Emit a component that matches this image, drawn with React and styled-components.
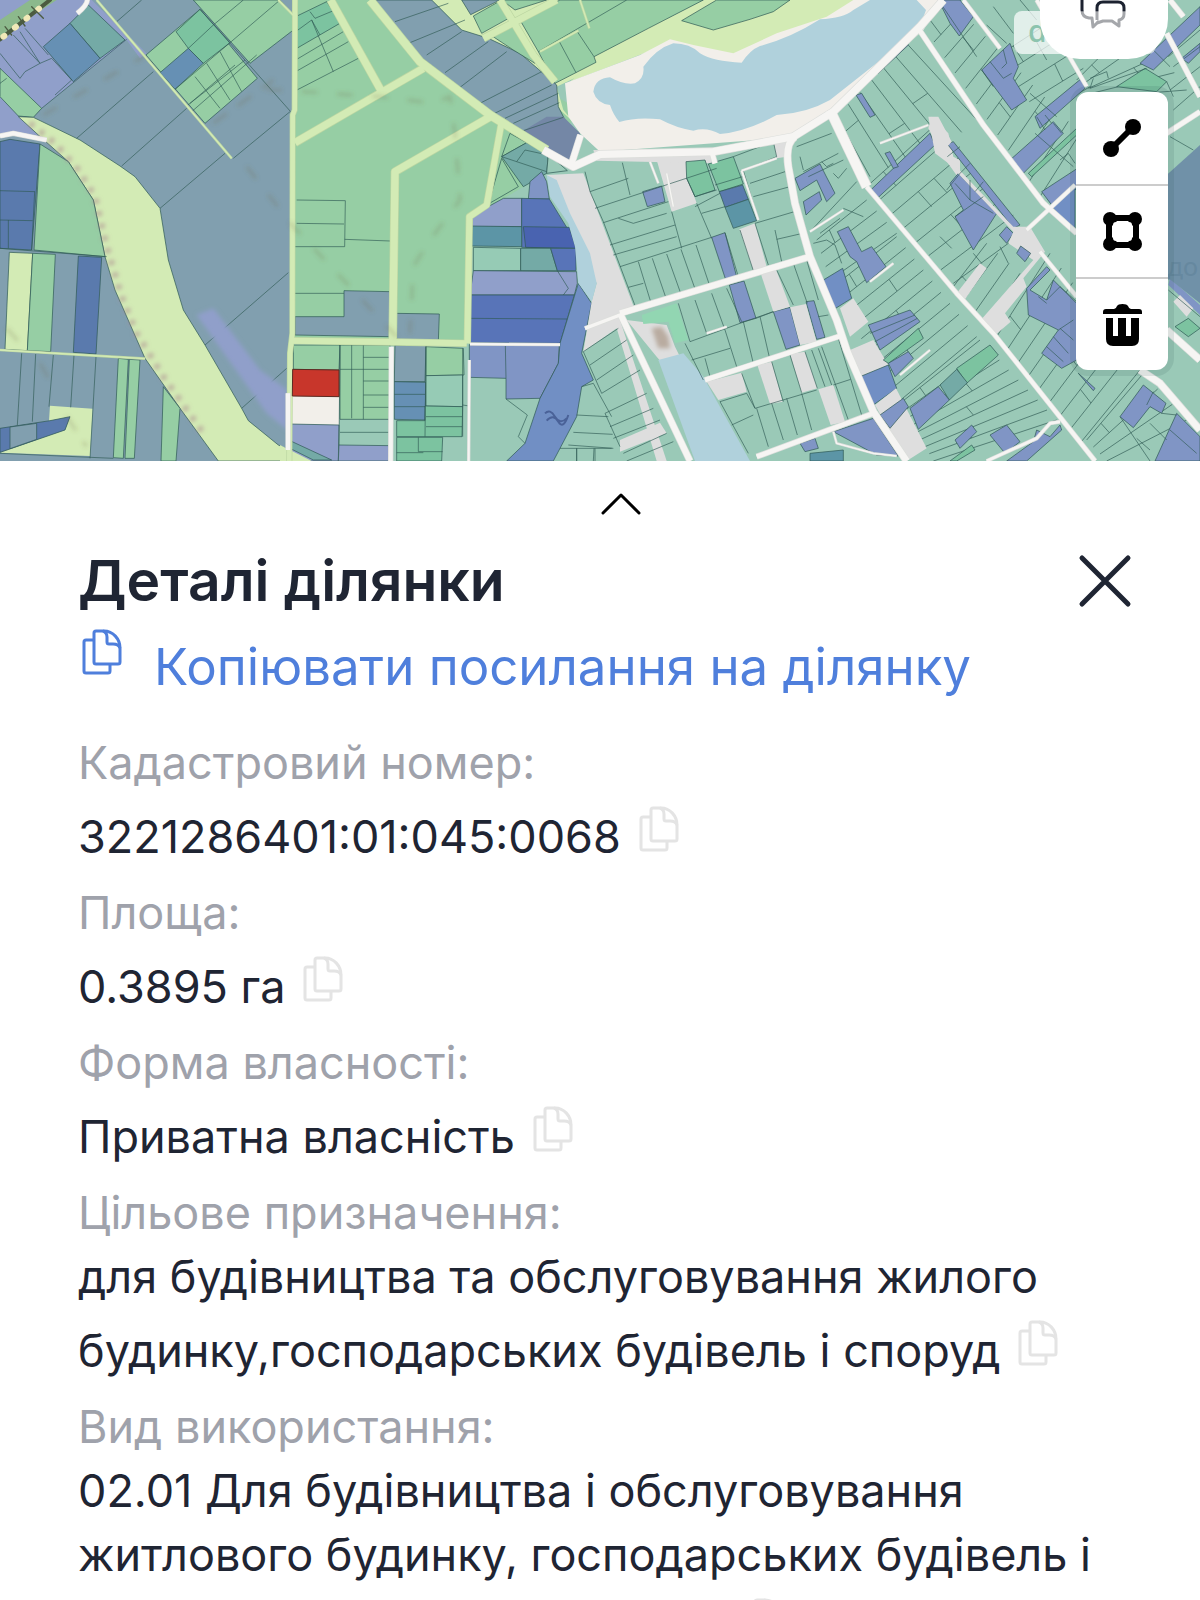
import React from 'react';
import styled, { createGlobalStyle } from 'styled-components';

const COLORS = {
  slate: '#819faf',
  green: '#96cea4',
  teal: '#9ac9b7',
  aqua: '#96cbb5',
  mint: '#7cc3a0',
  park: '#92d6b2',
  sea: '#74aaa6',
  pond: '#5c95a6',
  lime: '#d3ebb5',
  violet: '#909fca',
  purple: '#8095c5',
  dusk: '#7487a6',
  blue: '#5a7aad',
  royal: '#5874b8',
  deep: '#4963b0',
  steel: '#6690b4',
  river: '#718fc4',
  water: '#b0d1dc',
  sand: '#f2efea',
  grey: '#dedede',
  red: '#c8362b',
};

// [color, points, outlined]
const WEST = [
  ['slate', '0,0 885,0 875,1383 0,1383'],
  ['violet', '0,0 275,0 440,160 420,175 380,120 125,325 0,205'],
  ['violet', '0,285 60,350 115,405 0,400'],
  ['slate', '285,0 590,0 440,160 400,120'],
  ['sea', '265,15 375,120 300,175 210,70', 1],
  ['steel', '210,70 300,175 220,245 130,140', 1],
  ['green', '0,205 125,325 100,352 55,348 0,290', 1],
  ['green', '580,0 840,0 882,48 880,90 750,190', 1],
  ['green', '438,165 600,28 772,235 615,370', 1],
  ['mint', '528,95 600,28 690,128 610,190 565,145', 1],
  ['steel', '480,218 565,145 610,190 525,268', 1],
  ['lime', '55,350 100,352 240,420 360,498 405,530 480,625 505,780 550,930 615,1035 725,1225 745,1262 835,1335 935,1383 655,1383 540,1225 435,1075 345,870 315,770 280,600 205,485 115,405', 1],
  ['blue', '0,425 30,418 120,432 95,750 0,745', 1],
  ['green', '120,432 205,485 280,600 315,770 102,750', 1],
  ['lime', '28,757 98,760 82,1052 15,1048', 1],
  ['green', '98,760 166,763 152,1055 82,1052', 1],
  ['blue', '235,768 305,772 288,1062 220,1057', 1],
  ['green', '355,1075 385,1078 370,1375 340,1373', 1],
  ['green', '388,1078 420,1080 403,1375 375,1375', 1],
  ['green', '490,1160 540,1225 528,1383 483,1383', 1],
  ['lime', '150,1217 278,1226 270,1368 0,1358 195,1290 210,1250 147,1262'],
  ['blue', '0,1285 150,1262 210,1250 195,1290 0,1357', 1],
  ['slate', '30,1281 110,1270 110,1318 30,1346', 1],
];

const WEST_LINES =
  'M125,325L380,118M230,415L460,215M365,498L560,325M480,625L675,460M700,475L870,335M615,1035L865,818M725,1225L860,1105M350,65L425,0' +
  'M600,28L872,335M640,75L730,0M690,128L840,0M640,75L565,145M525,268L690,128M560,318L735,180M575,335L770,165M585,230L660,325M620,190L690,300M660,155L725,275M570,310L705,195' +
  'M0,572L105,575M0,660L98,662M25,660L25,745M104,575L95,750M0,745L320,770' +
  'M65,1060L52,1275M107,1062L97,1265M160,1065L147,1220M222,1065L212,1222M288,1070L270,1375M0,1360L340,1375' +
  'M60,95L120,190L155,175L215,240L165,285M40,105L118,188M75,85L145,165M0,160L60,235L75,215L120,190M0,250L20,235';

const CENTER = [
  ['green', '45,0 320,0 900,330 730,560 600,640 565,655 565,1030 40,1030'],
  ['lime', '455,0 1200,0 1120,120 830,260 850,330 880,365 840,330 720,160 545,90'],
  ['slate', '280,0 455,0 545,90 625,115 720,160 830,255 835,320 860,370 900,400 870,482 800,455 640,340 420,170', 1],
  ['dusk', '725,395 800,350 850,350 900,400 870,482 800,450'],
  ['green', '580,48 665,0 695,50 605,100', 1],
  ['slate', '545,0 660,0 572,44', 1],
  ['green', '632,105 700,70 765,190 700,150', 1],
  ['green', '665,0 800,0 705,30', 1],
  ['mint', '47,50 140,5 183,68 47,147', 1],
  ['slate', '45,950 192,950 192,872 330,875 330,1010 45,1005', 1],
  ['slate', '347,940 478,942 475,1024 345,1022', 1],
  ['green', '40,1035 180,1035 177,1110 40,1108', 1],
  ['green', '180,1035 330,1035 330,1258 180,1258', 1],
  ['sand', '22,1188 177,1190 177,1275 22,1272'],
  ['violet', '30,1272 177,1275 175,1383 22,1383', 1],
  ['violet', '177,1335 332,1337 330,1383 175,1383', 1],
  ['sea', '30,1322 155,1380 100,1380 30,1345', 1],
  ['lime', '0,1335 95,1383 0,1383'],
  ['slate', '345,1035 438,1035 435,1145 343,1145', 1],
  ['steel', '343,1145 438,1147 435,1260 343,1258', 1],
  ['green', '438,1040 550,1045 552,1125 438,1127', 1],
  ['aqua', '438,1127 548,1125 548,1220 438,1218', 1],
  ['mint', '350,1262 435,1262 435,1218 548,1220 546,1310 350,1310', 1],
  ['mint', '350,1312 488,1312 485,1383 350,1383', 1],
  ['green', '665,470 690,400 740,428', 1],
  ['sea', '665,470 740,428 805,462 800,520 730,560', 1],
  ['teal', '805,462 862,512 800,520', 1],
  ['green', '665,475 715,560 625,612', 1],
  ['violet', '570,650 670,595 725,595 725,680 570,680', 1],
  ['purple', '745,597 750,545 785,515 800,545 808,597', 1],
  ['royal', '725,595 808,597 865,690 888,745 725,742', 1],
  ['pond', '570,678 725,680 725,740 572,738', 1],
  ['deep', '730,680 868,682 888,745 737,742', 1],
  ['aqua', '580,742 722,745 722,812 580,812', 1],
  ['sea', '722,745 812,745 832,812 722,812', 1],
  ['royal', '812,745 888,745 888,812 832,812', 1],
  ['violet', '580,812 890,815 892,850 883,885 570,885', 1],
  ['royal', '570,885 883,885 840,1030 568,1028', 1],
  ['purple', '568,1034 838,1035 835,1090 780,1195 678,1197 678,1135 568,1132', 1],
  ['river', '895,850 935,910 905,1060 940,1140 905,1160 890,1250 820,1383 680,1383 735,1330 780,1195 835,1090 840,1030', 1],
  ['grey', '800,525 910,520 1065,930 1015,945 1160,1383 1130,1383 1010,985 910,1055 935,905 950,850'],
  ['water', '800,525 830,540 870,640 930,760 950,850 935,905 895,850 885,740 865,670 810,590'],
];

const CENTER_LINES =
  'M345,65L505,10M390,128L555,60M440,165L545,95M495,218L625,125M540,262L680,155M590,315L785,215M640,342L815,255M675,355L835,280M700,370L838,308M730,392L850,352' +
  'M47,95L95,60L120,105M47,180L190,95M47,215L205,125M47,272L235,175M95,60L160,215M90,35L105,55L165,30' +
  'M50,600L196,602L194,740L45,740M50,670L192,672M194,718L332,723M45,880L192,880' +
  'M215,1035L215,1255M250,1035L250,1258M180,1108L328,1108M250,1072L328,1072M250,1143L328,1143M250,1185L328,1185M250,1222L328,1222M180,1297L328,1297M180,1035L177,1335' +
  'M343,1183L435,1183M343,1220L435,1220M438,1035L435,1310M548,1045L548,1310M438,1250L546,1250M438,1280L546,1280M415,1312L415,1355L488,1355M350,1358L430,1358M548,1215L568,1218' +
  'M665,470L800,515M710,485L735,450L790,462M568,955L862,957M676,1035L678,1135M832,812L865,865L850,885M678,1197L742,1245L715,1310L735,1330' +
  'M890,1245L985,1250M880,1297L998,1303M865,1335L1000,1345M890,1345L890,1383M942,1345L940,1383M905,1160L940,1150L995,1250';

const LAKE = [
  ['lime', '105,180 265,85 430,0 900,0 800,80 520,170 330,130 30,245'],
  ['green', '-120,60 0,0 430,0 265,85 102,170 108,187 -15,250 -65,155', 1],
  ['sand', '15,250 240,165 330,118 400,135 520,160 650,100 800,50 880,0 1150,0 1090,90 820,330 700,412 120,455 60,400 25,350'],
  ['green', '365,62 470,0 690,0 640,35 570,58 460,90', 1],
  ['grey', '290,480 380,485 385,540 410,610 335,635'],
  ['grey', '640,420 700,410 680,470 650,475'],
  ['grey', '100,450 460,458 455,490 110,482'],
  ['mint', '378,485 435,480 465,570 405,590 380,535', 1],
  ['mint', '445,492 520,470 550,552 478,575', 1],
  ['blue', '478,575 548,555 565,598 495,622', 1],
  ['pond', '495,622 565,598 590,662 520,685', 1],
  ['purple', '248,575 305,558 315,605 262,620', 1],
  ['purple', '455,712 495,698 530,830 498,842', 1],
  ['purple', '508,855 552,843 588,955 540,968', 1],
  ['purple', '640,935 690,922 720,1035 678,1048', 1],
  ['purple', '738,905 762,902 795,1012 770,1018', 1],
  ['grey', '538,688 585,670 620,800 580,812'],
  ['grey', '602,820 648,808 690,920 640,935'],
  ['grey', '690,922 738,912 770,1025 720,1035'],
  ['grey', '592,1095 635,1085 668,1205 630,1212'],
  ['grey', '690,1062 735,1055 772,1165 725,1178'],
  ['grey', '775,1168 820,1155 855,1265 812,1275'],
  ['grey', '440,1145 545,1118 560,1175 475,1200'],
  ['grey', '180,1320 300,1268 320,1300 180,1355'],
  ['grey', '200,960 320,975 345,1040 395,1140 360,1150 290,1070'],
  ['park', '245,945 350,910 385,1020 345,1030 325,965 250,972'],
  ['water', '295,1080 370,1060 430,1130 570,1383 405,1383'],
  ['purple', '825,345 1035,122 1045,135 955,220 940,215', 1],
  ['purple', '888,285 905,280 945,345 930,352', 1],
  ['purple', '705,535 780,492 798,528 825,580 800,605 770,540 720,572', 1],
  ['purple', '730,605 778,575 785,600 738,645', 1],
  ['purple', '1110,400 1125,435 955,592 932,570', 1],
  ['purple', '975,460 990,455 1015,500 1000,505', 1],
  ['purple', '832,695 865,680 905,755 935,740 978,800 920,848 890,785 870,770', 1],
  ['river', '790,840 848,805 875,895 822,928', 1],
  ['grey', '840,925 880,895 925,965 870,1010'],
  ['grey', '870,1050 940,1020 985,1095 900,1130'],
  ['river', '900,1130 985,1095 1010,1165 940,1215', 1],
  ['grey', '945,1215 1008,1165 1100,1345 1040,1383'],
  ['purple', '820,1295 940,1255 1015,1368 950,1365', 1],
  ['purple', '720,1330 765,1315 775,1345 735,1355', 1],
  ['pond', '750,1360 850,1350 850,1383 750,1383', 1],
  ['grey', '1115,350 1165,400 1180,470 1200,480 1200,540 1150,470 1105,385'],
];

const LAKE_LINES =
  'M90,575L205,535M187,488L210,585M105,625L470,505M130,668L325,605M150,735L345,675M160,765L350,710M180,800L455,712M175,655L220,670L320,640M75,515L90,575L130,665L230,930M235,785L275,915M277,775L320,900M320,762L365,888M363,748L408,875M408,735L450,860M495,698L535,830M540,690L580,812M205,862L250,850M335,635L365,745M410,610L455,715' +
  'M-2,125L48,218M50,92L102,170M-65,155L200,0' +
  'M380,535L405,590L470,570M465,555L548,530M520,470L640,425L650,470L550,512L595,660M405,620L480,580M425,640L495,620M585,670L720,630M645,690L665,785M650,718L728,700M570,550L675,515M580,590L690,560M585,670L625,795' +
  'M650,810L700,915M700,790L742,910M740,780L775,900M355,910L390,1025L540,970L640,935M405,900L440,1000M455,880L495,990M500,865L545,965M550,965L580,1090M600,950L630,1080M495,990L530,1100M375,1030L430,1140M395,1080L510,1045M435,1075L450,1130M588,955L640,935M775,950L805,945' +
  'M545,1120L585,1225L770,1170M590,1225L625,1340M635,1210L670,1320M680,1195L712,1305M725,1180L755,1290M635,1085L670,1205M690,1065L725,1178M735,1055L772,1165M755,1050L795,1160M775,1045L815,1155M785,1040L865,1260M835,1015L905,1245M480,1205L560,1180L585,1225M515,1275L580,1245M480,1205L565,1360M820,1155L872,1138' +
  'M70,1055L175,985M90,1095L200,1020M110,1140L220,1065M125,1180L240,1110M135,1240L260,1180M150,1280L280,1225M160,1315L300,1260M70,1055L125,1180M135,1240L180,1340M190,1360L320,1300M200,1383L340,1325M0,1345L155,1345M50,1345L50,1383M105,1345L105,1383' +
  'M710,440L815,400M720,470L730,510M730,515L835,460M745,530L850,480M785,485L800,500L820,490M820,520L835,535L860,505M755,690L890,545M760,730L800,720L825,735L845,790M780,700L840,655M850,625L910,650';

const EAST = [
  ['purple', '235,0 300,0 340,50 298,108 270,70', 1],
  ['purple', '365,210 450,130 475,200 460,235 500,300 455,330', 1],
  ['purple', '525,350 665,235 675,265 540,385', 1],
  ['purple', '450,480 580,365 610,400 490,520', 1],
  ['mint', '505,520 650,385 650,405 515,530', 1],
  ['purple', '545,575 660,500 660,560 575,615', 1],
  ['river', '575,620 645,560 645,690', 1],
  ['purple', '262,432 280,425 480,675 460,685', 1],
  ['purple', '270,550 295,520 410,640 340,750 285,650 310,630', 1],
  ['purple', '418,705 440,680 460,700 440,730', 1],
  ['purple', '500,865 560,800 570,810 510,870 560,900 580,840 650,910 650,1080 605,1105 545,1060 595,990 505,945', 1],
  ['purple', '25,975 150,930 180,965 60,1050', 1],
  ['mint', '70,1080 175,985 190,1015 85,1090', 1],
  ['mint', '290,1105 390,1035 415,1065 320,1150', 1],
  ['sea', '240,1155 290,1108 322,1148 268,1200', 1],
  ['purple', '85,1090 145,1055 160,1075 105,1130', 1],
  ['purple', '60,1245 130,1195 145,1220 90,1285', 1],
  ['purple', '150,1225 235,1160 268,1200 175,1288', 1],
  ['purple', '285,1320 335,1275 350,1295 300,1345', 1],
  ['purple', '390,1305 440,1275 480,1325 435,1360', 1],
  ['purple', '440,1383 520,1325 530,1290 570,1310 600,1275 605,1290 500,1383', 1],
  ['mint', '270,1383 335,1335 345,1350 290,1383', 1],
  ['purple', '850,1155 918,1210 905,1240 870,1220 820,1283 780,1250', 1],
  ['purple', '885,1383 950,1240 1020,1310 1020,1383', 1],
  ['purple', '655,1120 705,1165 700,1172', 1],
  ['purple', '840,190 1020,20 1020,75 880,210', 1],
  ['purple', '965,175 1020,130 1020,155 985,190', 1],
  ['purple', '930,835 1020,915 1020,945 925,855'],
  ['mint', '945,980 985,955 1020,985 985,1010', 1],
  ['mint', '770,260 855,205 920,245 890,275', 1],
  ['grey', '205,350 235,350 275,425 262,440 270,480 460,680 510,680 555,755 490,835 500,860 435,940 452,965 400,1010 358,965 520,780 445,730 460,695 265,490 225,460'],
  ['purple', '470,760 482,738 512,760 495,785', 1],
  ['grey', '290,880 360,790 380,805 310,905'],
  ['grey', '940,905 960,885 1000,925 980,950'],
];

const EAST_LINES =
  'M235,0L350,170M380,75L440,130M400,20L460,100M480,0L530,60M510,90L560,180M365,210L400,260M390,185L430,235L455,220M430,150L440,190L425,205' +
  'M700,235L690,265L860,205M690,235L740,215L745,235M920,245L940,290M925,170L1020,90M940,200L1020,140M930,270L1020,200M940,330L1020,260M930,410L1000,450M880,150L930,200' +
  'M580,370L605,400M555,345L575,370M530,350L555,390M525,400L640,500M600,480L625,460L645,490M510,280L590,350' +
  'M285,550L330,600L330,540M330,600L400,640M285,650L370,590M300,520L260,570M175,575L215,620M240,710L275,745M420,740L445,790M340,760L365,790' +
  'M560,900L600,860L650,905M535,890L560,910M600,985L640,1020M580,1010L625,1060M560,1040L610,1085M595,990L640,960' +
  'M925,870L1020,950M820,1060L870,1110M780,1250L870,1383M870,1270L920,1320M830,1315L870,1350M905,1240L950,1245M880,1175L860,1215M930,1290L1010,1360' +
  'M30,1000L165,945M45,1025L172,955M300,440L262,470M330,490L300,520M370,545L345,575';

const LIME_ROADS = [
  [14, 'M885,0L884,330L878,345L877,1000L870,1060L868,1383'],
  [22, 'M885,428L1140,280L1270,205'],
  [22, 'M992,0L1145,275'],
  [24, 'M1110,0L1260,185L1470,345L1640,450'],
  [22, 'M1480,345L1185,515L1178,1030'],
  [18, 'M1505,365L1460,615L1408,650L1402,1030'],
  [18, 'M872,1022L1180,1026L1400,1030'],
  [20, 'M1500,0L1600,165L1665,245M1450,115L1670,0'],
  [4, 'M290,0L695,475M0,1050L435,1076M1740,0L1768,85M835,0L882,48M1620,155L1735,92'],
];

const WHITE_ROADS = [
  [12, 'M232,40Q262,15 262,0M0,408L40,400L140,420'],
  [12, 'M1174,1040L1172,1383M864,1180L864,1350'],
  [6, 'M1408,1080L1406,1383M1410,1032L1680,1034'],
  [22, 'M1630,450L1720,500L1800,463L2140,455L2380,410L2500,335L2760,80L2830,0'],
  [20, 'M2385,410Q2355,430 2365,500L2385,610L2430,770L2510,960L2540,1050L2620,1235L2720,1383'],
  [18, 'M1715,490L1742,405M1860,940L2430,770M1860,940L2070,1383'],
  [14, 'M2115,1140L2530,1005M2270,1370L2620,1240M2135,455L2145,490'],
  [28, 'M2490,330L2600,560'],
  [12, 'M2600,560L2870,880L2980,1000L3285,1383'],
  [14, 'M2755,85L2950,375L3130,610L3230,700'],
  [10, 'M2890,0L3000,145M3110,0L3260,260M3080,690L3225,555M3120,755L3230,890'],
  [14, 'M3500,400L3600,335M3500,100L3600,290M3510,0L3550,50'],
  [20, 'M3420,1110L3480,1150L3600,1290M3500,990L3600,1080'],
  [4, 'M1950,485L1975,550M2000,520L2020,620M2225,512L2275,660M2330,475L2225,512M2430,695L2530,630M2640,430L2785,375M2700,1125L2790,1050M2610,845L2680,790M2120,1000L2180,980M2500,1295L2510,1330L2620,1360L2690,1368'],
  [8, 'M2960,1383L3110,1315L3150,1270L3180,1265'],
  [10, 'M1755,985L1860,945'],
];

// Garden strips: two facing edges of a block and how many plots lie between them
const STRIPS = [
  [[2510, 350], [2720, 130], [2610, 530], [2940, 370], 6],
  [[2600, 560], [2860, 850], [2800, 380], [3080, 690], 7],
  [[2450, 720], [2490, 840], [2600, 600], [2690, 700], 3],
  [[2500, 860], [2690, 1210], [2690, 710], [2930, 1010], 9],
  [[2700, 1210], [2800, 1383], [2940, 1020], [3170, 1260], 8],
  [[2770, 80], [3120, 590], [2850, 0], [3240, 400], 11],
  [[2990, 170], [3120, 350], [3190, 40], [3270, 260], 4],
  [[2990, 1010], [3240, 1330], [3150, 760], [3420, 1110], 8],
  [[3260, 1320], [3320, 1383], [3430, 1120], [3560, 1260], 3],
  [[2860, 860], [2960, 970], [2960, 730], [3060, 820], 3],
  [[3230, 240], [3300, 290], [3410, 60], [3560, 270], 4],
];

const stripPath = ([a, b, c, d, count]) => {
  const at = (from, to, k) => [0, 1].map((i) => Math.round(from[i] + (to[i] - from[i]) * k));
  const lines = Array.from({ length: count + 1 }, (_, i) => `M${at(a, b, i / count)}L${at(c, d, i / count)}`);
  // a few cross fences so that the plots differ in length
  const fences = Array.from({ length: Math.floor(count / 2) }, (_, i) => {
    const k = 0.25 + ((i * 37) % 50) / 100;
    const start = at(at(a, b, (i * 2) / count), at(c, d, (i * 2) / count), k);
    const end = at(at(a, b, (i * 2 + 1) / count), at(c, d, (i * 2 + 1) / count), k);
    return `M${start}L${end}`;
  });
  return lines.concat(fences).join('');
};

const Parcels = ({ x, items, lines }) => (
  <g transform={`translate(${x} 0)`}>
    {items.map(([color, points, outlined], i) => (
      <polygon
        key={i}
        points={points}
        fill={COLORS[color]}
        stroke={outlined ? '#2f5a55' : 'none'}
        strokeOpacity="0.7"
        strokeWidth="3"
      />
    ))}
    <path d={lines} fill="none" stroke="#2f5a55" strokeOpacity="0.65" strokeWidth="3" />
  </g>
);

const Roads = ({ color, items, edge }) => (
  <g fill="none" strokeLinejoin="round">
    {items.map(([width, d], i) => (
      <path key={`e${i}`} d={d} stroke={edge} strokeWidth={width + 4} />
    ))}
    {items.map(([width, d], i) => (
      <path key={i} d={d} stroke={color} strokeWidth={width} />
    ))}
  </g>
);

const CadastralMap = () => (
  <MapSvg viewBox="0 0 3600 1383" role="img" aria-label="Кадастрова карта">
    <defs>
      <filter id="soft" x="-20%" y="-20%" width="140%" height="140%">
        <feGaussianBlur stdDeviation="6" />
      </filter>
    </defs>
    <rect width="3600" height="1383" fill={COLORS.teal} />
    <g fill="none" stroke="#355f58" strokeOpacity="0.7" strokeWidth="3">
      {STRIPS.map((strip, i) => (
        <path key={i} d={stripPath(strip)} />
      ))}
    </g>
    <Parcels x={0} items={WEST} lines={WEST_LINES} />
    <path d="M590,945L640,925L780,1110L862,1170V1290L800,1240Z" fill={COLORS.violet} filter="url(#soft)" />
    <Parcels x={840} items={CENTER} lines={CENTER_LINES} />
    <Parcels x={1680} items={LAKE} lines={LAKE_LINES} />
    <path
      transform="translate(1680 0)"
      d="M100,275Q105,235 150,232Q190,255 225,250Q255,235 250,200Q290,145 340,130Q390,130 420,160Q460,185 545,188Q570,150 600,138Q690,115 780,58Q850,55 880,30L930,0H1070L1098,30Q1080,90 1000,150L810,300Q740,340 650,345Q560,395 480,402Q440,380 400,392Q350,385 300,358Q230,350 178,366Q160,345 150,315Q110,310 100,275Z"
      fill={COLORS.water}
    />
    <Parcels x={2580} items={EAST} lines={EAST_LINES} />
    <path d="M3500,525L3600,435V910L3500,830Z" fill="#7091a8" />
    <Roads color="#d3ebb5" edge="#bcd6a2" items={LIME_ROADS} />
    <Roads color="#f6f5f3" edge="#dcdedb" items={WHITE_ROADS} />
    <polygon points="878,1108 1017,1110 1017,1190 877,1188" fill={COLORS.red} stroke="#5d2a22" strokeWidth="3" />
    <path d="M0,110L170,0H90L0,60Z" fill="#8cb98c" />
    <g fill="none" strokeLinecap="round">
      <path d="M0,118L150,0" stroke="#4b5b40" strokeWidth="12" />
      <path d="M10,110L140,8" stroke="#f1e9b8" strokeWidth="18" strokeDasharray="4 40" />
      <path d="M15,80L35,105M55,50L75,78M95,20L130,55" stroke="#4b5b40" strokeWidth="4" />
    </g>
    <g fill="none" stroke="#6f6a42" strokeOpacity="0.26" strokeWidth="9" filter="url(#soft)">
      <path d="M130,345L430,170M740,500L880,680L1190,1010M800,268L1140,290L1300,310L1350,290L1365,400L1380,600L1290,720L1240,800L1230,1000" strokeDasharray="46 60" />
      <path d="M20,985L60,1030M120,1090L160,1160M200,1250L260,1340M640,370L820,240" strokeDasharray="50 40" />
    </g>
    <path
      d="M90,370L165,430L235,510L285,590L320,740L365,890L410,1000L490,1130L610,1300"
      fill="none"
      stroke="#a8808c"
      strokeOpacity="0.6"
      strokeWidth="18"
      strokeDasharray="14 24"
      filter="url(#soft)"
    />
    <path d="M1635,1240Q1650,1225 1665,1250T1700,1255M1640,1262Q1660,1240 1675,1265T1705,1245" fill="none" stroke="#4a6298" strokeWidth="6" />
    <path d="M1955,985L1985,980L2005,1010L2010,1045L1975,1045Z" fill="#b9aca0" filter="url(#soft)" />
    <MapCaption x="3594" y="828" textAnchor="end">до</MapCaption>
  </MapSvg>
);

const CopyIcon = () => (
  <svg width="40" height="47" viewBox="0 0 40 47" fill="none" stroke="currentColor" strokeWidth="3" strokeLinejoin="round">
    <path d="M11 11H4a2 2 0 0 0-2 2v29a2 2 0 0 0 2 2h22a2 2 0 0 0 2-2v-7" />
    <path d="M14 2h8c9 0 16 8 16 17v14a2 2 0 0 1-2 2H14a2 2 0 0 1-2-2V4a2 2 0 0 1 2-2Z" />
    <path d="M21 2c3 1 4 3 4 6v5a2 2 0 0 0 2 2h4c4 0 6 1 7 4" />
  </svg>
);

const LineIcon = () => (
  <svg width="40" height="40" viewBox="0 0 40 40">
    <path d="M9 31L31 9" stroke="#000" strokeWidth="6" />
    <circle cx="9" cy="31" r="8" />
    <circle cx="31" cy="9" r="8" />
  </svg>
);

const PolygonIcon = () => (
  <svg width="39" height="39" viewBox="0 0 39 39">
    <path fillRule="evenodd" d="M3 3H36V36H3ZM12 9Q9 9 9 12V27Q9 30 12 30H27Q30 30 30 27V12Q30 9 27 9Z" />
    <circle cx="7" cy="7" r="7" />
    <circle cx="32" cy="7" r="7" />
    <circle cx="7" cy="32" r="7" />
    <circle cx="32" cy="32" r="7" />
    <rect x="10" y="10" width="19" height="19" rx="3" fill="#fff" />
  </svg>
);

const TrashIcon = () => (
  <svg width="39" height="44" viewBox="0 0 39 44">
    <path d="M0 11V9q0-3 3-3h8q2 0 3-3 1-2 5.500-2t5.500 2q1 3 3 3h8q3 0 3 3v2Z" />
    <path d="M3 15H10V33H15V15H23V33H28V15H36V36Q36 43 29 43H10Q3 43 3 36Z" />
  </svg>
);

const ChatIcon = () => (
  <svg width="50" height="36" viewBox="0 0 50 36" fill="none" strokeWidth="3" strokeLinejoin="round">
    <defs>
      <linearGradient id="fade" gradientUnits="userSpaceOnUse" x1="0" y1="0" x2="0" y2="36">
        <stop offset="0.5" stopColor="#1c2230" />
        <stop offset="0.52" stopColor="#a5a7ab" />
      </linearGradient>
    </defs>
    <path d="M3 0V17Q3 24 10 25H13L14 34L20 28" stroke="url(#fade)" />
    <path d="M18 27V15Q18 9 24 9H39Q45 9 45 15V21Q45 26 40 27V33L33 28H24L18 30" stroke="url(#fade)" />
  </svg>
);

const FIELDS = [
  { label: 'Кадастровий номер:', value: '3221286401:01:045:0068' },
  { label: 'Площа:', value: '0.3895 га' },
  { label: 'Форма власності:', value: 'Приватна власність' },
  { label: 'Цільове призначення:', value: 'для будівництва та обслуговування жилого будинку,господарських будівель і споруд' },
  {
    label: 'Вид використання:',
    value: '02.01 Для будівництва і обслуговування житлового будинку, господарських будівель і споруд (присадибна ділянка)',
  },
];

const App = () => {
  return (
    <Screen>
      <GlobalStyle />
      <MapArea>
        <CadastralMap />
        <MapBadge>d</MapBadge>
        <ChatButton type="button" aria-label="Чат">
          <ChatIcon />
        </ChatButton>
        <Toolbar>
          <ToolButton type="button" aria-label="Виміряти відстань">
            <LineIcon />
          </ToolButton>
          <ToolButton type="button" aria-label="Виміряти площу">
            <PolygonIcon />
          </ToolButton>
          <ToolButton type="button" aria-label="Видалити">
            <TrashIcon />
          </ToolButton>
        </Toolbar>
      </MapArea>
      <Panel>
        <Handle type="button" aria-label="Розгорнути">
          <svg width="42" height="24" viewBox="0 0 42 24" fill="none" stroke="#000" strokeWidth="3" strokeLinecap="round" strokeLinejoin="round">
            <path d="M3 21L21 3L39 21" />
          </svg>
        </Handle>
        <PanelHeader>
          <Title>Деталі ділянки</Title>
          <CloseButton type="button" aria-label="Закрити">
            <svg width="54" height="54" viewBox="0 0 54 54" stroke="#1f2533" strokeWidth="5" strokeLinecap="round">
              <path d="M4 4L50 50M50 4L4 50" />
            </svg>
          </CloseButton>
        </PanelHeader>
        <CopyLink href="#">
          <CopyIcon />
          Копіювати посилання на ділянку
        </CopyLink>
        <FieldList>
          {FIELDS.map(({ label, value }) => (
            <div key={label}>
              <FieldLabel>{label}</FieldLabel>
              <FieldValue>
                {value}
                <CopyButton type="button" aria-label="Копіювати">
                  <CopyIcon />
                </CopyButton>
              </FieldValue>
            </div>
          ))}
        </FieldList>
      </Panel>
    </Screen>
  );
};

export default App;

const GlobalStyle = createGlobalStyle`
  * {
    box-sizing: border-box;
  }

  body {
    margin: 0;
    background-color: #fff;
    font-family: 'Inter', sans-serif;
  }
`;

const Screen = styled.div`
  display: flex;
  flex-direction: column;
  height: 100vh;
  overflow: hidden;
`;

const MapArea = styled.div`
  position: relative;
  flex-shrink: 0;
  overflow: hidden;
`;

const MapSvg = styled.svg`
  display: block;
  width: 100%;
  height: auto;
`;

const MapCaption = styled.text`
  font-family: 'Noto Sans', sans-serif;
  font-size: 76px;
  fill: #66889f;
`;

const MapBadge = styled.div`
  position: absolute;
  top: 11px;
  right: 44px;
  width: 142px;
  height: 43px;
  padding-left: 14px;
  border-radius: 8px;
  background-color: rgba(255, 255, 255, 0.7);
  color: #8cc4ae;
  font: 500 30px/40px 'Noto Sans', sans-serif;
`;

const IconButton = styled.button`
  padding: 0;
  border: none;
  background: none;
  cursor: pointer;
`;

const ChatButton = styled(IconButton)`
  position: absolute;
  top: -68px;
  right: 32px;
  display: flex;
  align-items: flex-end;
  justify-content: center;
  width: 128px;
  height: 127px;
  padding-bottom: 30px;
  border-radius: 40px;
  background-color: #fff;
`;

const Toolbar = styled.div`
  position: absolute;
  top: 92px;
  right: 32px;
  width: 92px;
  border-radius: 12px;
  background-color: #fff;
  box-shadow: 0 0 0 6px rgba(40, 80, 80, 0.12);
`;

const ToolButton = styled(IconButton)`
  display: flex;
  align-items: center;
  justify-content: center;
  width: 100%;
  height: 92px;

  & + & {
    height: 93px;
    border-top: 2px solid #ccc;
  }
`;

const Panel = styled.main`
  display: flex;
  flex-direction: column;
  flex: 1;
  min-height: 0;
  overflow: hidden;
  padding: 20px 68px 0 78px;
  background-color: #fff;
`;

const Handle = styled(IconButton)`
  align-self: center;
  height: 48px;
  margin-left: 32px;
  flex-shrink: 0;
`;

const PanelHeader = styled.header`
  display: flex;
  align-items: center;
  justify-content: space-between;
  margin-top: 12px;
`;

const Title = styled.h1`
  margin: 0;
  color: #1f2533;
  font-size: 57px;
  font-weight: 600;
  line-height: 80px;
`;

const CloseButton = styled(IconButton)`
  display: flex;
`;

const CopyLink = styled.a`
  display: flex;
  align-items: flex-start;
  gap: 32px;
  margin-top: 8px;
  padding-left: 4px;
  color: #4f7fdc;
  font-size: 51px;
  line-height: 76px;
  text-decoration: none;
`;

const FieldList = styled.dl`
  display: flex;
  flex-direction: column;
  gap: 12px;
  margin: 26px 0 0;
`;

const FieldLabel = styled.dt`
  color: #9fa2ab;
  font-size: 45px;
  line-height: 64px;
`;

const FieldValue = styled.dd`
  margin: 0;
  color: #1f2533;
  font-size: 45px;
  line-height: 64px;
`;

const CopyButton = styled(IconButton)`
  display: inline-flex;
  margin-left: 18px;
  padding-top: 11px;
  color: #e4e4e4;
  vertical-align: baseline;
`;
